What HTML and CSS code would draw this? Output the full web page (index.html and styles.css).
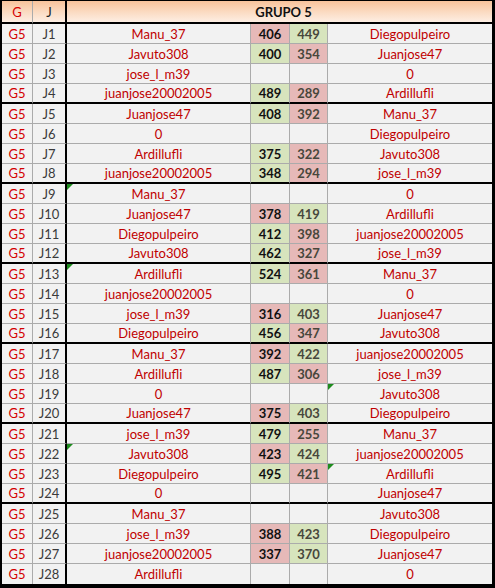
FILE: index.html
```html
<!DOCTYPE html>
<html>
<head>
<meta charset="utf-8">
<link rel="stylesheet" href="styles.css">
</head>
<body>
<div class="sheet" id="sheet">
  <div class="c h g">G</div>
  <div class="c h j">J</div>
  <div class="c h title">GRUPO 5</div>
</div>
<script>
const data = [
 ["Manu_37","406p","449g","Diegopulpeiro"],
 ["Javuto308","400g","354p","Juanjose47"],
 ["jose_l_m39","","","0"],
 ["juanjose20002005","489g","289p","Ardillufli"],
 ["Juanjose47","408g","392p","Manu_37"],
 ["0","","","Diegopulpeiro"],
 ["Ardillufli","375g","322p","Javuto308"],
 ["juanjose20002005","348g","294p","jose_l_m39"],
 ["Manu_37","","","0","L"],
 ["Juanjose47","378p","419g","Ardillufli"],
 ["Diegopulpeiro","412g","398p","juanjose20002005"],
 ["Javuto308","462g","327p","jose_l_m39"],
 ["Ardillufli","524g","361p","Manu_37","L"],
 ["juanjose20002005","","","0"],
 ["jose_l_m39","316p","403g","Juanjose47"],
 ["Diegopulpeiro","456g","347p","Javuto308"],
 ["Manu_37","392p","422g","juanjose20002005"],
 ["Ardillufli","487g","306p","jose_l_m39"],
 ["0","","","Javuto308","R"],
 ["Juanjose47","375p","403g","Diegopulpeiro"],
 ["jose_l_m39","479g","255p","Manu_37"],
 ["Javuto308","423p","424g","juanjose20002005","L"],
 ["Diegopulpeiro","495g","421p","Ardillufli","R"],
 ["0","","","Juanjose47"],
 ["Manu_37","","","Javuto308"],
 ["jose_l_m39","388p","423g","Diegopulpeiro"],
 ["juanjose20002005","337p","370g","Juanjose47"],
 ["Ardillufli","","","0"]
];
const sheet = document.getElementById('sheet');
data.forEach((r, i) => {
  const n = i + 1;
  let rc = 'c';
  if (n % 4 === 0 && n < 28) rc += ' end';
  if (n === 28) rc += ' last';
  const add = (cls, txt) => {
    const d = document.createElement('div');
    d.className = rc + ' ' + cls;
    d.textContent = txt;
    sheet.appendChild(d);
  };
  add('g', 'G5');
  add('j', 'J' + n);
  add('n1' + (r[4] === 'L' ? ' mark' : ''), r[0]);
  const s = v => v ? (v.endsWith('p') ? ' pink' : ' green') : '';
  add('s1' + s(r[1]), r[1].slice(0, -1));
  add('s2' + s(r[2]), r[2].slice(0, -1));
  add('n2' + (r[4] === 'R' ? ' mark' : ''), r[3]);
});
</script>
</body>
</html>
```

FILE: styles.css
```css
html, body {
  margin: 0;
  padding: 0;
  background: #ffffff;
}

.sheet {
  width: 495px;
  box-sizing: border-box;
  display: grid;
  grid-template-columns: 31px 34px 184px 39px 38px 164px;
  grid-auto-rows: 20px;
  grid-template-rows: 23px;
  border-top: 1px solid #000;
  border-left: 2px solid #000;
  border-right: 3px solid #000;
  border-bottom: 4px solid #000;
  background: #f2f2f2;
  font-family: "Lato", "Open Sans", sans-serif;
  font-size: 13px;
}

.c {
  box-sizing: border-box;
  position: relative;
  display: flex;
  align-items: center;
  justify-content: center;
  border-right: 1px solid #ababab;
  border-bottom: 1px solid #ababab;
  color: #c00000;
  white-space: nowrap;
  line-height: 1;
  padding-top: 1px;
}

.c.end {
  border-bottom: 2px solid #000;
}

.c.last {
  border-bottom: none;
}

.h {
  background: linear-gradient(to bottom, #f8c39b 0%, #fbdcc4 55%, #fdeee3 100%);
  border-bottom: 2px solid #000;
}

.h.g {
  color: #d40000;
}

.h.j {
  color: #222;
}

.h.title {
  grid-column: 3 / 7;
  border-right: none;
  color: #111;
  font-weight: bold;
  padding-left: 8px;
}

.g {
  color: #d40000;
}

.j {
  color: #3a3a3a;
  border-right: 2px solid #000;
}

.n2 {
  border-right: none;
}

.s1, .s2 {
  font-weight: bold;
}

.s1 {
  color: #111;
}

.s2 {
  color: #48473c;
}

.pink {
  background: #e6b9b8;
}

.green {
  background: #d7e4bd;
}

.mark::before {
  content: "";
  position: absolute;
  left: 0;
  top: 0;
  border-top: 6px solid #1e8c1e;
  border-right: 6px solid transparent;
}
```
